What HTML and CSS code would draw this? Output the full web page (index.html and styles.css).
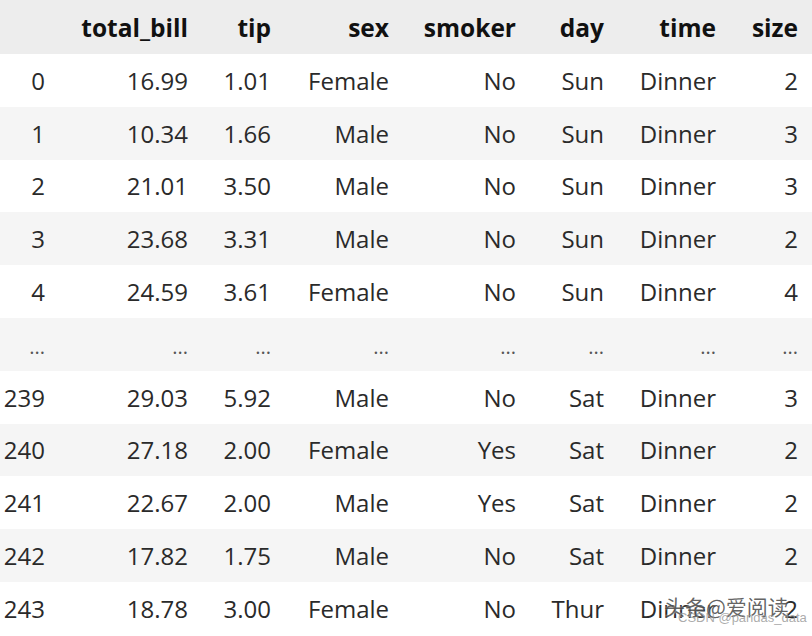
FILE: index.html
```html
<!DOCTYPE html>
<html lang="en">
<head>
<meta charset="utf-8">
<title>tips dataframe</title>
<link rel="stylesheet" href="styles.css">
</head>
<body>
<div class="frame">
<table class="df">
<colgroup>
<col class="c-idx"><col class="c-bill"><col class="c-tip"><col class="c-sex"><col class="c-smoker"><col class="c-day"><col class="c-time"><col class="c-size">
</colgroup>
<thead>
<tr><th></th><th>total_bill</th><th>tip</th><th>sex</th><th>smoker</th><th>day</th><th>time</th><th>size</th></tr>
</thead>
<tbody>
<tr><td>0</td><td>16.99</td><td>1.01</td><td>Female</td><td>No</td><td>Sun</td><td>Dinner</td><td>2</td></tr>
<tr><td>1</td><td>10.34</td><td>1.66</td><td>Male</td><td>No</td><td>Sun</td><td>Dinner</td><td>3</td></tr>
<tr><td>2</td><td>21.01</td><td>3.50</td><td>Male</td><td>No</td><td>Sun</td><td>Dinner</td><td>3</td></tr>
<tr><td>3</td><td>23.68</td><td>3.31</td><td>Male</td><td>No</td><td>Sun</td><td>Dinner</td><td>2</td></tr>
<tr><td>4</td><td>24.59</td><td>3.61</td><td>Female</td><td>No</td><td>Sun</td><td>Dinner</td><td>4</td></tr>
<tr class="dots"><td>...</td><td>...</td><td>...</td><td>...</td><td>...</td><td>...</td><td>...</td><td>...</td></tr>
<tr><td>239</td><td>29.03</td><td>5.92</td><td>Male</td><td>No</td><td>Sat</td><td>Dinner</td><td>3</td></tr>
<tr><td>240</td><td>27.18</td><td>2.00</td><td>Female</td><td>Yes</td><td>Sat</td><td>Dinner</td><td>2</td></tr>
<tr><td>241</td><td>22.67</td><td>2.00</td><td>Male</td><td>Yes</td><td>Sat</td><td>Dinner</td><td>2</td></tr>
<tr><td>242</td><td>17.82</td><td>1.75</td><td>Male</td><td>No</td><td>Sat</td><td>Dinner</td><td>2</td></tr>
<tr><td>243</td><td>18.78</td><td>3.00</td><td>Female</td><td>No</td><td>Thur</td><td>Dinner</td><td>2</td></tr>
</tbody>
</table>
<div class="watermark">
<span class="wm-main">头条@爱阅读</span>
<span class="wm-sub">CSDN @pandas_data</span>
</div>
</div>
</body>
</html>
```
FILE: styles.css
```css
html, body {
  margin: 0;
  padding: 0;
  background: #ffffff;
}
.frame {
  position: relative;
  width: 812px;
  height: 636px;
  overflow: hidden;
}
.df {
  width: 812px;
  border-collapse: collapse;
  table-layout: fixed;
  font-family: "Open Sans", "Noto Sans", sans-serif;
  font-size: 24px;
  color: #2a2a2a;
}
.c-idx { width: 57px; }
.c-bill { width: 143px; }
.c-tip { width: 83px; }
.c-sex { width: 118px; }
.c-smoker { width: 127px; }
.c-day { width: 88px; }
.c-time { width: 112px; }
.c-size { width: 84px; }
.df th, .df td {
  text-align: right;
  padding: 0 12px 0 0;
  white-space: nowrap;
  vertical-align: middle;
}
.df td:last-child, .df th:last-child {
  padding-right: 14px;
}
.df thead tr {
  background: #ededed;
  height: 54px;
}
.df th {
  font-weight: 700;
  font-size: 24.5px;
  color: #111;
}
.df tbody tr {
  height: 52.8px;
}
.df tbody tr:nth-child(even) {
  background: #f5f5f5;
}
.df .dots td {
  font-size: 20px;
  color: #555;
  padding-top: 4px;
}
.watermark {
  position: absolute;
  left: 664px;
  top: 592px;
  width: 140px;
  height: 38px;
  white-space: nowrap;
}
.wm-main {
  position: absolute;
  left: 0;
  top: 0;
  font-family: "Noto Sans CJK SC", sans-serif;
  font-size: 21px;
  line-height: 28px;
  color: rgba(40, 40, 40, 0.72);
  text-shadow: 0 0 2px #fff;
}
.wm-sub {
  position: absolute;
  left: 14px;
  top: 18px;
  font-family: "Liberation Sans", sans-serif;
  font-size: 13px;
  line-height: 16px;
  color: rgba(150, 150, 150, 0.8);
}
```
